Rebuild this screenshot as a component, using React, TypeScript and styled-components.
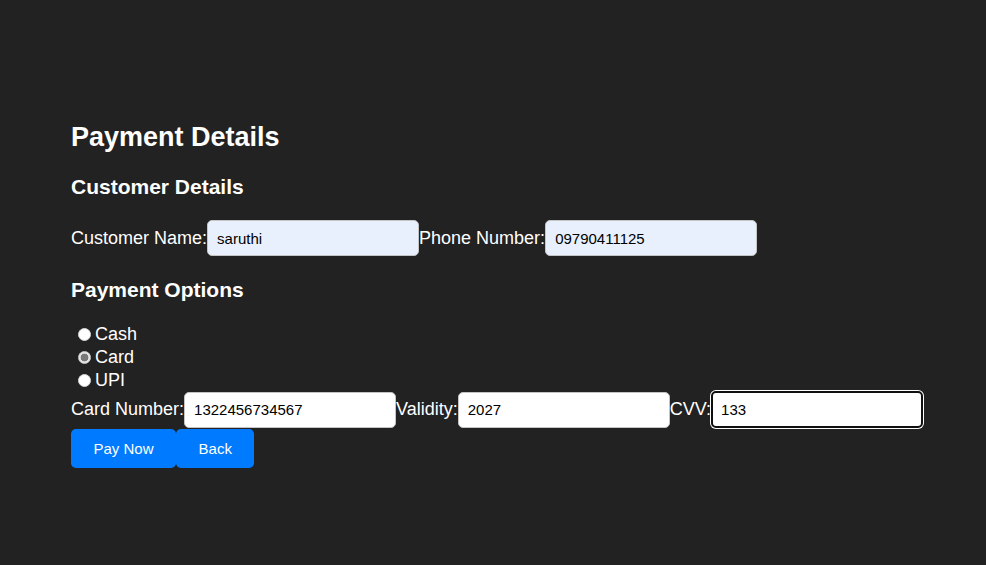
import React from "react";
import styled, { createGlobalStyle, css } from "styled-components";

const GlobalStyle = createGlobalStyle`
  html, body {
    margin: 0;
    padding: 0;
    background: #222222;
    font-family: "Liberation Sans", Arial, sans-serif;
    color: #ffffff;
  }
  * { box-sizing: border-box; }
`;

const Page = styled.div`
  min-height: 565px;
  background: #222222;
  padding: 122px 0 0 71px;
  display: flex;
  flex-direction: column;
  align-items: flex-start;
`;

const Title = styled.h2`
  margin: 0;
  font-size: 27px;
  line-height: 31px;
  font-weight: 700;
  color: #ffffff;
`;

const Section = styled.h3<{ $top: number }>`
  margin: ${(p) => p.$top}px 0 0 0;
  font-size: 21px;
  line-height: 24px;
  font-weight: 700;
  color: #ffffff;
`;

const Row = styled.div<{ $top: number }>`
  display: flex;
  align-items: center;
  margin-top: ${(p) => p.$top}px;
`;

const Label = styled.label`
  font-size: 18px;
  line-height: 21px;
  color: #ffffff;
  white-space: nowrap;
`;

const Field = styled.input<{ $autofill?: boolean; $focused?: boolean }>`
  width: 212px;
  height: 36px;
  padding: 0 9px;
  border: 1px solid #c4c4c4;
  border-radius: 5px;
  background: ${(p) => (p.$autofill ? "#e8f0fe" : "#ffffff")};
  color: #000000;
  font-family: "Liberation Sans", Arial, sans-serif;
  font-size: 15px;
  outline: none;
  ${(p) =>
    p.$focused &&
    css`
      border: 2px solid #101010;
      padding: 0 8px;
      box-shadow: 0 0 0 1px #ffffff;
      height: 37px;
    `}
`;

const RadioGroup = styled.div`
  display: flex;
  flex-direction: column;
  margin-top: 21px;
`;

const RadioLine = styled.label`
  display: flex;
  align-items: center;
  height: 23px;
  font-size: 18px;
  color: #ffffff;
`;

const Radio = styled.input`
  appearance: none;
  -webkit-appearance: none;
  width: 13px;
  height: 13px;
  margin: 0 4px 0 7px;
  border-radius: 50%;
  background: #ffffff;
  border: 1px solid #d8d8d8;
  &:checked {
    background: radial-gradient(circle, #7a7a7a 0 3.6px, #e6e6e6 4.2px);
    border-color: #cfcfcf;
  }
`;

const Buttons = styled.div`
  display: flex;
  margin-top: 1px;
`;

const Button = styled.button`
  height: 39px;
  padding: 0 22.5px;
  border: none;
  border-radius: 5px;
  background: #007bff;
  color: #ffffff;
  font-family: "Liberation Sans", Arial, sans-serif;
  font-size: 15px;
  cursor: pointer;
`;

export default function App() {
  return (
    <>
      <GlobalStyle />
      <Page>
        <Title>Payment Details</Title>
        <Section $top={22}>Customer Details</Section>
        <Row $top={21}>
          <Label>Customer Name:</Label>
          <Field $autofill defaultValue="saruthi" />
          <Label>Phone Number:</Label>
          <Field $autofill defaultValue="09790411125" />
        </Row>
        <Section $top={22}>Payment Options</Section>
        <RadioGroup>
          <RadioLine>
            <Radio type="radio" name="pay" value="cash" />
            Cash
          </RadioLine>
          <RadioLine>
            <Radio type="radio" name="pay" value="card" defaultChecked />
            Card
          </RadioLine>
          <RadioLine>
            <Radio type="radio" name="pay" value="upi" />
            UPI
          </RadioLine>
        </RadioGroup>
        <Row $top={-1}>
          <Label>Card Number:</Label>
          <Field defaultValue="1322456734567" />
          <Label>Validity:</Label>
          <Field defaultValue="2027" />
          <Label>CVV:</Label>
          <Field $focused defaultValue="133" />
        </Row>
        <Buttons>
          <Button>Pay Now</Button>
          <Button>Back</Button>
        </Buttons>
      </Page>
    </>
  );
}
